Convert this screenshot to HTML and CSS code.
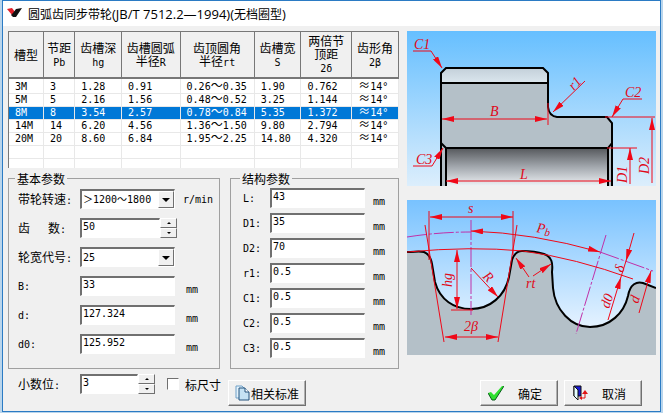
FILE: index.html
```html
<!DOCTYPE html>
<html lang="zh-CN">
  <head>
    <meta charset="UTF-8" />
    <meta name="viewport" content="width=device-width, initial-scale=1.0" />
    <title>圆弧齿同步带轮</title>
    <link rel="stylesheet" href="styles.css">
  </head>
  <body>
    <div class="window">
      <header class="titlebar">
        <svg class="logo" viewBox="0 0 15 11" aria-hidden="true">
          <path d="M0 1L5 0L8 4L5 7z" fill="#e0202a" />
          <path d="M9 1L15 0L9 9H6L4 7L6 5z" fill="#111" />
        </svg>
        <h1>圆弧齿同步带轮<span class="latin">(JB/T 7512.2—1994)(</span>无档圈型<span class="latin">)</span></h1>
      </header>

      <main class="content">
        <div class="left">
          <div class="list">
            <table>
              <colgroup>
                <col class="c-type" /><col class="c-pitch" /><col class="c-depth" /><col class="c-arc" />
                <col class="c-rt" /><col class="c-width" /><col class="c-delta" /><col class="c-angle" />
              </colgroup>
              <thead>
                <tr>
                  <th>槽型</th>
                  <th>节距<br /><span class="mono">Pb</span></th>
                  <th>齿槽深<br /><span class="mono">hg</span></th>
                  <th>齿槽圆弧<br />半径<span class="mono">R</span></th>
                  <th>齿顶圆角<br />半径<span class="mono">rt</span></th>
                  <th>齿槽宽<br /><span class="mono">S</span></th>
                  <th>两倍节<br />顶距<br /><span class="mono">2δ</span></th>
                  <th>齿形角<br /><span class="mono">2β</span></th>
                </tr>
              </thead>
              <tbody>
                <tr><td>3M</td><td>3</td><td>1.28</td><td>0.91</td><td>0.26<i>～</i>0.35</td><td>1.90</td><td>0.762</td><td><i>≈</i>14°</td></tr>
                <tr><td>5M</td><td>5</td><td>2.16</td><td>1.56</td><td>0.48<i>～</i>0.52</td><td>3.25</td><td>1.144</td><td><i>≈</i>14°</td></tr>
                <tr class="selected"><td>8M</td><td>8</td><td>3.54</td><td>2.57</td><td>0.78<i>～</i>0.84</td><td>5.35</td><td>1.372</td><td><i>≈</i>14°</td></tr>
                <tr><td>14M</td><td>14</td><td>6.20</td><td>4.56</td><td>1.36<i>～</i>1.50</td><td>9.80</td><td>2.794</td><td><i>≈</i>14°</td></tr>
                <tr><td>20M</td><td>20</td><td>8.60</td><td>6.84</td><td>1.95<i>～</i>2.25</td><td>14.80</td><td>4.320</td><td><i>≈</i>14°</td></tr>
                <tr><td></td><td></td><td></td><td></td><td></td><td></td><td></td><td></td></tr>
                <tr><td></td><td></td><td></td><td></td><td></td><td></td><td></td><td></td></tr>
              </tbody>
            </table>
          </div>

          <div class="groups">
            <fieldset class="group basic">
              <legend>基本参数</legend>
              <div class="row">
                <label for="speed">带轮转速<span class="mono">:</span></label>
                <span class="combo">
                  <select id="speed"><option>＞1200～1800</option></select>
                  <span class="arrow"></span>
                </span>
                <span class="unit">r/min</span>
              </div>
              <div class="row">
                <label for="teeth" class="spread"><span>齿</span><span>数<span class="mono">:</span></span></label>
                <span class="spinner">
                  <input id="teeth" type="text" value="50" />
                  <span class="spin">
                    <button type="button" class="up" aria-label="增加"></button>
                    <button type="button" class="down" aria-label="减少"></button>
                  </span>
                </span>
              </div>
              <div class="row">
                <label for="code">轮宽代号<span class="mono">:</span></label>
                <span class="combo">
                  <select id="code"><option>25</option></select>
                  <span class="arrow"></span>
                </span>
              </div>
              <div class="row">
                <label for="b" class="mono">B:</label>
                <input id="b" type="text" value="33" />
                <span class="unit mm">mm</span>
              </div>
              <div class="row">
                <label for="d" class="mono">d:</label>
                <input id="d" type="text" value="127.324" />
                <span class="unit mm">mm</span>
              </div>
              <div class="row">
                <label for="d0" class="mono">d0:</label>
                <input id="d0" type="text" value="125.952" />
                <span class="unit mm">mm</span>
              </div>
            </fieldset>

            <fieldset class="group structure">
              <legend>结构参数</legend>
              <div class="row">
                <label for="l" class="mono">L:</label>
                <input id="l" type="text" value="43" />
                <span class="unit">mm</span>
              </div>
              <div class="row">
                <label for="bore" class="mono">D1:</label>
                <input id="bore" type="text" value="35" />
                <span class="unit">mm</span>
              </div>
              <div class="row">
                <label for="hub" class="mono">D2:</label>
                <input id="hub" type="text" value="70" />
                <span class="unit">mm</span>
              </div>
              <div class="row">
                <label for="r1" class="mono">r1:</label>
                <input id="r1" type="text" value="0.5" />
                <span class="unit">mm</span>
              </div>
              <div class="row">
                <label for="c1" class="mono">C1:</label>
                <input id="c1" type="text" value="0.5" />
                <span class="unit">mm</span>
              </div>
              <div class="row">
                <label for="c2" class="mono">C2:</label>
                <input id="c2" type="text" value="0.5" />
                <span class="unit">mm</span>
              </div>
              <div class="row">
                <label for="c3" class="mono">C3:</label>
                <input id="c3" type="text" value="0.5" />
                <span class="unit">mm</span>
              </div>
            </fieldset>
          </div>
        </div>

        <div class="pictures">
          <!-- pulley cross section -->
          <svg class="drawing" viewBox="0 0 249 155" role="img" aria-label="带轮结构">
            <defs>
              <linearGradient id="sky" x1="0" y1="0" x2="0" y2="1">
                <stop offset="0" stop-color="#66bfff" />
                <stop offset="1" stop-color="#dceefc" />
              </linearGradient>
              <linearGradient id="rim" x1="0" y1="0" x2="0" y2="1">
                <stop offset="0" stop-color="#c3d0d9" />
                <stop offset="1" stop-color="#dbe6ee" />
              </linearGradient>
              <linearGradient id="boreFill" x1="0" y1="0" x2="0" y2="1">
                <stop offset="0" stop-color="#55585c" />
                <stop offset="0.5" stop-color="#a3a8ae" />
                <stop offset="1" stop-color="#eef2f5" />
              </linearGradient>
              <marker id="tip" viewBox="0 0 12 6" refX="12" refY="3" markerWidth="12" markerHeight="6" markerUnits="userSpaceOnUse" orient="auto-start-reverse">
                <path d="M0 0L12 3L0 6z" fill="#f00818" />
              </marker>
            </defs>
            <rect width="249" height="155" fill="url(#sky)" />
            <path d="M34 155V42L39 37H136L141 42V76Q142 85 150 86H200L205 92V155z" fill="#b4c0c8" />
            <path d="M34 48V42L39 37H136L141 42V52H34z" fill="url(#rim)" />
            <rect x="39" y="117" width="162" height="38" fill="url(#boreFill)" />
            <path d="M34 155V42L39 37H136L141 42V76Q142 85 150 86H200L205 92V155M34 52H141M34 112L39 117H201L205 112M39 117V155M201 117V155" class="edge" />
            <g class="dim">
              <path d="M35 88H140" marker-start="url(#tip)" marker-end="url(#tip)" />
              <path d="M39 150H204" marker-start="url(#tip)" marker-end="url(#tip)" />
              <path d="M6 20H24L35 37" marker-end="url(#tip)" />
              <path d="M6 135H25L36 117" marker-end="url(#tip)" />
              <path d="M178 50L146 81" marker-end="url(#tip)" />
              <path d="M235 68H216L205 86" marker-end="url(#tip)" />
              <path d="M245 152V87" marker-end="url(#tip)" />
              <path d="M223 153V117" marker-end="url(#tip)" />
              <path d="M141 72V94M198 86H248M200 117H230" />
            </g>
            <g class="note">
              <text x="83" y="85">B</text>
              <text x="113" y="148">L</text>
              <text x="7" y="18">C1</text>
              <text x="9" y="133">C3</text>
              <text x="218" y="66">C2</text>
              <text transform="translate(167 60) rotate(-48)">r1</text>
              <text transform="translate(242 143) rotate(-90)">D2</text>
              <text transform="translate(220 152) rotate(-90)">D1</text>
            </g>
          </svg>

          <!-- tooth profile -->
          <svg class="drawing" viewBox="0 0 249 155" role="img" aria-label="齿形">
            <defs>
              <linearGradient id="mist" x1="0" y1="0" x2="0" y2="1">
                <stop offset="0" stop-color="#78c2ff" />
                <stop offset="0.8" stop-color="#e2f1ff" />
              </linearGradient>
            </defs>
            <rect width="249" height="155" fill="url(#mist)" />
            <path d="M0 52C8 52 12 51 17 52C22 54 24 58 25 64L28 82C33 100 47 109 64 109C83 109 98 96 102 77L105 60C107 54 110 51 115 51C125 51 131 52 137 54C145 57 146 63 145 72L146 88C148 110 164 127 183 127C203 127 217 113 221 96C223 84 230 81 236 83L249 88V155H0z" fill="#b4c0c8" />
            <path d="M0 52C8 52 12 51 17 52C22 54 24 58 25 64L28 82C33 100 47 109 64 109C83 109 98 96 102 77L105 60C107 54 110 51 115 51C125 51 131 52 137 54C145 57 146 63 145 72L146 88C148 110 164 127 183 127C203 127 217 113 221 96C223 84 230 81 236 83L249 88" class="edge" />
            <g class="axis">
              <path d="M0 37Q32 32 64 32M64 20V115" />
              <path d="M199 35L169 134M193 52L246 71" />
            </g>
            <g class="dim">
              <path d="M23 17H106" marker-start="url(#tip)" marker-end="url(#tip)" />
              <path d="M64 31Q126 33 193 52" marker-start="url(#tip)" marker-end="url(#tip)" />
              <path d="M38 137H91" marker-start="url(#tip)" marker-end="url(#tip)" />
              <path d="M50 50V109" marker-start="url(#tip)" marker-end="url(#tip)" />
              <path d="M64 68L91 97" marker-end="url(#tip)" />
              <path d="M122 77L109 58" marker-end="url(#tip)" />
              <path d="M126 76L144 64" marker-end="url(#tip)" />
              <path d="M227 33L219 61" marker-end="url(#tip)" />
              <path d="M201 120L214 77" marker-end="url(#tip)" />
              <path d="M232 113L244 71" marker-end="url(#tip)" />
              <path d="M22 11V60M106 11V55M18 25L37 142M110 25L91 142M44 110H66" />
              <path d="M0 52Q64 46 116 51Q168 58 226 79M219 61L214 77" />
            </g>
            <g class="note">
              <text x="61" y="13">s</text>
              <text x="57" y="131">2β</text>
              <text transform="translate(45 87) rotate(-90)">hg</text>
              <text transform="translate(75 77) rotate(45)">R</text>
              <text x="119" y="88">rt</text>
              <text transform="translate(129 32) rotate(10)">P<tspan class="sub" dy="2">b</tspan></text>
              <text transform="translate(216 73) rotate(-72)">δ</text>
              <text transform="translate(202 109) rotate(-72)">d0</text>
              <text transform="translate(231 104) rotate(-72)">d</text>
            </g>
          </svg>
        </div>
      </main>

      <footer class="footer">
        <div class="digits">
          <label for="digits">小数位<span class="mono">:</span></label>
          <span class="spinner">
            <input id="digits" type="text" value="3" />
            <span class="spin">
              <button type="button" class="up" aria-label="增加"></button>
              <button type="button" class="down" aria-label="减少"></button>
            </span>
          </span>
          <label class="check"><input type="checkbox" />标尺寸</label>
        </div>
        <button type="button" class="btn standards">
          <svg viewBox="0 0 15 16" width="15" height="16" aria-hidden="true">
            <path d="M1 1h6l3 3v9H1z" fill="#e4f2fb" stroke="#6fa0c8" />
            <path d="M4 3h6l4 4v8H4z" fill="#c5e2f4" stroke="#24527c" />
            <path d="M10 3v4h4" fill="#fff" stroke="#24527c" />
          </svg>
          相关标准
        </button>
        <div class="actions">
          <button type="button" class="btn">
            <svg viewBox="0 0 16 16" width="16" height="16" aria-hidden="true">
              <path d="M0 8L3 7L6 10L14 1H16L7 15H4z" fill="#2ee02e" />
              <path d="M0 8L4 15H7L16 1" fill="none" stroke="#0a5a1c" />
            </svg>
            确定
          </button>
          <button type="button" class="btn">
            <svg viewBox="0 0 16 16" width="16" height="16" aria-hidden="true">
              <path d="M2 1H9V11H2z" fill="#1a1ad0" stroke="#111" />
              <path d="M2 1L6 5V15L2 11z" fill="#e8ffff" stroke="#111" />
              <path d="M9 13H13V8" fill="none" stroke="#e01414" />
              <path d="M10 9L13 5L16 9zM10 11V15L7 13z" fill="#e01414" />
            </svg>
            取消
          </button>
        </div>
      </footer>
    </div>
  </body>
</html>
```

FILE: styles.css
```css
* {
  box-sizing: border-box;
}
body {
  margin: 0;
  padding: 0 2px 2px;
  background: #b9d5ec;
  color: #000;
  font-family: "Noto Sans CJK SC", sans-serif;
  font-size: 12px;
  line-height: 13px;
}
.mono,
.unit,
input,
td {
  font-family: "DejaVu Sans Mono", "Noto Sans CJK SC", monospace;
  font-size: 10px;
}
.window {
  display: flex;
  flex-direction: column;
  min-height: calc(100vh - 2px);
  border: 1px solid #2b7bc4;
  background: #f0f0f0;
}

/* title bar */
.titlebar {
  display: flex;
  align-items: center;
  gap: 6px;
  height: 25px;
  padding-left: 4px;
  background: #fff;
}
.logo {
  width: 15px;
  height: 11px;
}
h1 {
  margin: 0;
  font-size: 12px;
  font-weight: normal;
  line-height: 16px;
}
.latin {
  font-family: "Open Sans", sans-serif;
  font-size: 13px;
}

.content {
  display: grid;
  grid-template-columns: 391fr 249fr;
  gap: 8px;
  padding: 5px 4px 0 5px;
}

/* groove list */
.list {
  height: 137px;
  overflow: hidden;
  border-left: 1px solid #777;
  background: #fff;
}
table {
  width: 100%;
  table-layout: fixed;
  border-collapse: separate;
  border-spacing: 0;
}
.c-type { width: 9%; }
.c-pitch { width: 8%; }
.c-depth { width: 12%; }
.c-arc { width: 15%; }
.c-rt { width: 19%; }
.c-width { width: 12%; }
.c-delta { width: 13%; }
.c-angle { width: 12%; }
th {
  height: 48px;
  padding: 0;
  border: solid #777;
  border-width: 1px 1px 2px 0;
  background: #f0f0f0;
  font-weight: normal;
  line-height: 13px;
}
td {
  height: 13px;
  padding: 0 0 0 6px;
  border: solid #e8e8e8;
  border-width: 0 1px 1px 0;
  line-height: 12px;
  white-space: nowrap;
}
tbody tr:first-child td {
  height: 15px;
  padding-top: 2px;
}
td i {
  font-family: "Noto Sans CJK SC", sans-serif;
  font-size: 12px;
  font-style: normal;
  line-height: 0;
}
.selected td {
  background: #0078d7;
  color: #fff;
}

/* parameter groups */
.groups {
  display: grid;
  grid-template-columns: 212fr 169fr;
  gap: 10px;
  margin-top: 4px;
}
.group {
  display: flex;
  flex-direction: column;
  min-width: 0;
  margin: 0;
  border: 1px solid #a0a0a0;
}
.basic {
  gap: 9px;
  padding: 4px 8px 14px 9px;
}
.structure {
  gap: 5px;
  padding: 3px 8px 8px 12px;
}
legend {
  margin-left: -3px;
  padding: 0 2px;
}
.row {
  display: flex;
  align-items: center;
  height: 20px;
}
.basic label {
  flex: none;
  width: 62px;
}
.structure label {
  flex: none;
  width: 27px;
}
.row .spread {
  display: flex;
  justify-content: space-between;
  padding-right: 14px;
}
.unit {
  margin-left: 8px;
}
.mm,
.structure .unit {
  align-self: flex-end;
}
.mm {
  margin-left: 11px;
}
input[type="text"],
select {
  width: 95px;
  height: 20px;
  margin: 0;
  padding: 0 0 4px 1px;
  border: 1px solid #fff;
  border-top: 2px solid #707070;
  border-left: 2px solid #707070;
  border-radius: 0;
  background: #fff;
  color: #000;
}
select {
  padding-bottom: 0;
  appearance: none;
  font-family: "DejaVu Sans Mono", "Noto Sans CJK SC", monospace;
  font-size: 10px;
}
.combo {
  position: relative;
  display: flex;
}
.arrow {
  position: absolute;
  top: 2px;
  right: 1px;
  display: grid;
  place-content: center;
  width: 16px;
  height: 17px;
  border: 1px solid;
  border-color: #fff #707070 #707070 #fff;
  background: #f0f0f0;
  pointer-events: none;
}
.arrow::after {
  content: "";
  border: 4px solid transparent;
  border-top-color: #000;
  border-bottom: 0;
}
.spinner {
  display: flex;
}
.spinner input[type="text"] {
  width: 80px;
}
.spin {
  display: flex;
  flex-direction: column;
  width: 17px;
}
.spin button {
  display: grid;
  place-content: center;
  width: 17px;
  height: 10px;
  padding: 0;
  border: 1px solid;
  border-color: #fff #707070 #707070 #fff;
  background: #f0f0f0;
}
.up::after,
.down::after {
  content: "";
  border: 2px solid transparent;
}
.up::after {
  border-top: 0;
  border-bottom-color: #000;
}
.down::after {
  border-bottom: 0;
  border-top-color: #000;
}

/* drawings */
.pictures {
  display: flex;
  flex-direction: column;
  gap: 14px;
}
.drawing {
  display: block;
  width: 100%;
}
.edge {
  fill: none;
  stroke: #000;
  stroke-width: 2;
}
.dim {
  fill: none;
  stroke: #f00818;
  stroke-width: 1;
}
.axis {
  fill: none;
  stroke: #c030a8;
  stroke-width: 1;
  stroke-dasharray: 20 2 3 2;
}
.note {
  fill: #e00818;
  font-family: "Liberation Serif", serif;
  font-size: 14px;
  font-style: italic;
}
.sub {
  font-size: 11px;
}

/* bottom row */
.footer {
  display: flex;
  align-items: flex-end;
  padding: 5px 18px 5px 15px;
}
.digits {
  display: flex;
  align-items: center;
  width: 210px;
  padding-bottom: 12px;
}
.digits > label:first-child {
  width: 62px;
}
.digits .spinner input[type="text"] {
  width: 58px;
}
.check {
  display: flex;
  align-items: center;
  gap: 6px;
  margin-left: 12px;
  white-space: nowrap;
}
.check input {
  appearance: none;
  width: 12px;
  height: 12px;
  margin: 0;
  border: 1px solid;
  border-color: #707070 #fff #fff #707070;
  background: #fff;
}
.btn {
  display: flex;
  align-items: center;
  justify-content: center;
  gap: 14px;
  width: 78px;
  height: 26px;
  padding: 0 8px 0 0;
  border: 1px solid;
  border-color: #fff #707070 #707070 #fff;
  border-radius: 0;
  background: #f0f0f0;
  box-shadow: inset -1px -1px #b0b0b0;
  color: #000;
  font-family: inherit;
  font-size: 12px;
  white-space: nowrap;
}
.standards {
  gap: 1px;
  padding: 0;
}
.actions {
  display: flex;
  gap: 6px;
  margin-left: auto;
}
```
